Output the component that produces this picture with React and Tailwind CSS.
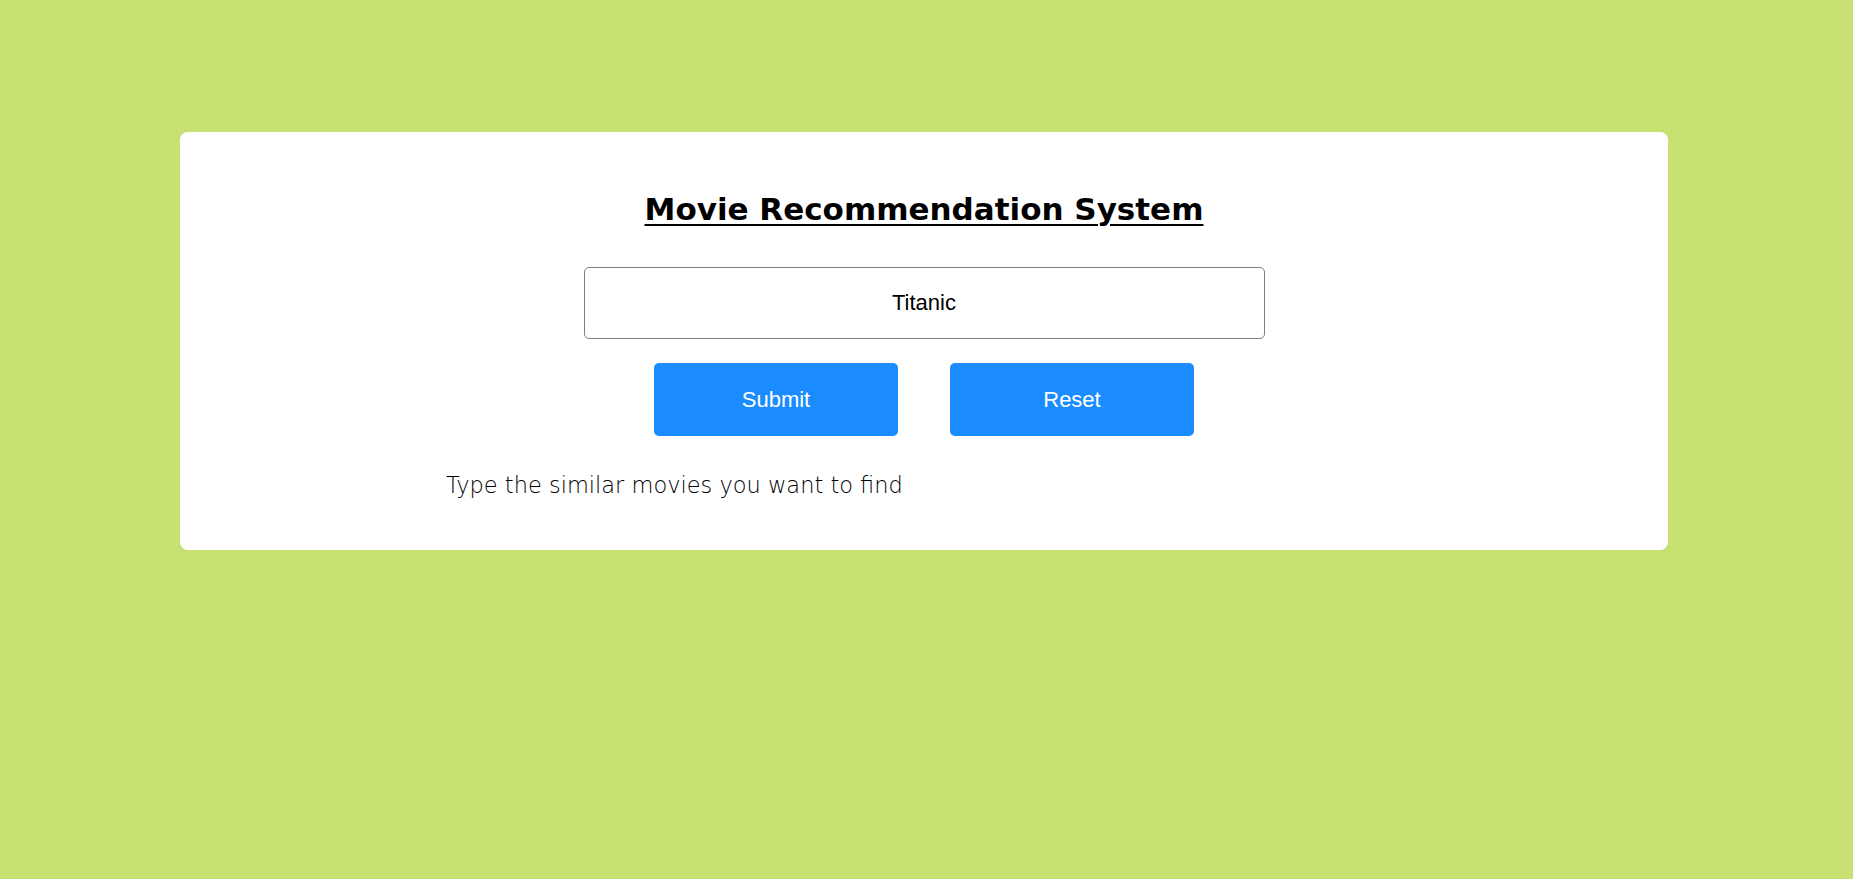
import React from "react";

export default function App() {
  return (
    <div className="min-h-[879px] w-full bg-[#c7e273] pt-[132px]">
      <div className="ml-[180px] w-[1488px] h-[418px] bg-white rounded-[8px] flex flex-col items-center">
        <h1 className="mt-[61px] font-['DejaVu_Sans',sans-serif] text-[31px] leading-[32px] font-bold text-black underline decoration-[2px] underline-offset-[4px]">
          Movie Recommendation System
        </h1>
        <input
          type="text"
          defaultValue="Titanic"
          className="mt-[42px] w-[681px] h-[72px] border border-[#808080] rounded-[5px] text-center font-['Liberation_Sans',Arial,sans-serif] text-[22px] text-black outline-none"
        />
        <div className="mt-[24px] flex gap-[52px] font-['Liberation_Sans',Arial,sans-serif]">
          <button className="w-[244px] h-[73px] bg-[#1b8cff] rounded-[5px] text-white text-[22px]">
            Submit
          </button>
          <button className="w-[244px] h-[73px] bg-[#1b8cff] rounded-[5px] text-white text-[22px]">
            Reset
          </button>
        </div>
        <p className="self-start ml-[266px] mt-[35px] font-['DejaVu_Sans',sans-serif] text-[22.5px] leading-[28px] font-extralight text-black">
          Type the similar movies you want to find
        </p>
      </div>
    </div>
  );
}
